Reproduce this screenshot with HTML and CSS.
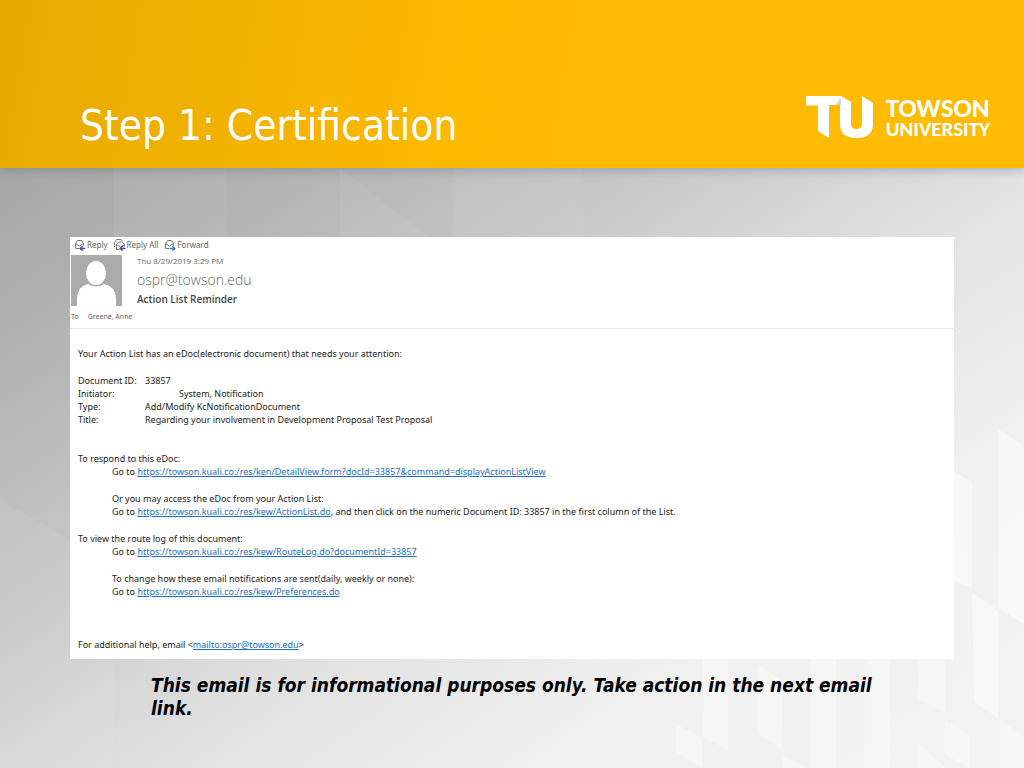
FILE: index.html
```
<!DOCTYPE html>
<html lang="en">
<head>
  <meta charset="UTF-8">
  <meta name="viewport" content="width=device-width, initial-scale=1">
  <title>Step 1: Certification</title>
  <link rel="stylesheet" href="styles.css">
</head>
<body>
  <svg class="backdrop" viewBox="0 0 1024 768" preserveAspectRatio="none" aria-hidden="true">
    <g fill="#fff">
      <path opacity=".05" d="M114 168h113v90H114zM340 168l90 70v20h-90zM453 168h130v90H453zM0 500l114 64v204H0z"/>
      <path opacity=".45" d="M998 429l26 17v178l-26-16zM954 471l18 11v106l-18-7zM972 593l26 17v108l-24-16z"/>
      <path opacity=".35" d="M703 655h25v95l-25-13zM757 664l25 17v68l-25-15zM811 655h25v113h-25zM865 655h25v113h-25zM918 655h27v58l-27-14zM676 724l26 14v30l-26-16zM945 720l24 14v34l-24-14zM1000 720l24 16v32h-24zM783 755l22 13h-22zM918 743l28 25h-28z"/>
    </g>
  </svg>

  <header class="banner">
    <h1>Step 1: Certification</h1>
    <div class="logo">
      <svg width="68" height="43" viewBox="0 0 68 43" aria-hidden="true">
        <path fill="#fff" d="M0 0h35l10 6v22q0 5 5.500 5t5.500-5V0l11 7v21q0 14-16.500 14T34 28V9H23v33l-11-7V9.500H0z"/>
        <path fill="#d5d5d5" d="M35 1v8h-5z"/>
      </svg>
      <div class="logo-text">
        <span class="logo-top">TOWSON</span>
        <span class="logo-bottom">UNIVERSITY</span>
      </div>
    </div>
  </header>

  <main>
    <article class="email">
      <div class="actions">
        <button type="button">
          <svg width="12" height="12" viewBox="0 0 12 12" fill="none" aria-hidden="true"><path stroke="#777" d="M1.500 9.500h4M1.500 9.500v-5l2-3h4l2 3v2M1.500 4.500l4 2.500 4-2.500"/><path stroke="#4a4aa8" stroke-width="1.500" d="M11 9.500H6.500M8.500 7.300L6.300 9.500l2.200 2.200"/></svg>
          Reply
        </button>
        <button type="button">
          <svg width="12" height="12" viewBox="0 0 12 12" fill="none" aria-hidden="true"><path stroke="#777" d="M2.500 10.500h3M2.500 10.500v-5l2-2.500h4l2 2.500v2M2.500 5.500l4 2.500 4-2.500M.5 8V3.500l2-3h4l2 1"/><path stroke="#4a4aa8" stroke-width="1.500" d="M11.500 9.500H6.500M8.500 7.300L6.300 9.500l2.200 2.200"/></svg>
          Reply All
        </button>
        <button type="button">
          <svg width="12" height="12" viewBox="0 0 12 12" fill="none" aria-hidden="true"><path stroke="#777" d="M1.500 9.500h4M1.500 9.500v-5l2-3h4l2 3v2M1.500 4.500l4 2.500 4-2.500"/><path stroke="#2f7fc6" stroke-width="1.500" d="M6 9.500h4.500M8.500 7.300L10.700 9.500l-2.200 2.200"/></svg>
          Forward
        </button>
      </div>

      <div class="sender">
        <svg class="avatar" width="51" height="51" viewBox="0 0 51 51" aria-hidden="true">
          <path fill="#ababab" d="M0 0h51v51H0z"/>
          <ellipse cx="25" cy="18" rx="10" ry="12" fill="#fff"/>
          <path fill="#fff" d="M6 51v-8q1-12 11-14 8 5 16 0 11 2 12 14v8z"/>
        </svg>
        <div>
          <div class="date">Thu 8/29/2019 3:29 PM</div>
          <div class="from">ospr@towson.edu</div>
          <h2>Action List Reminder</h2>
        </div>
      </div>
      <div class="to"><span>To</span><span>Greene, Anne</span></div>

      <div class="message">
        <p>Your Action List has an eDoc(electronic document) that needs your attention:</p>

        <table>
          <tr><th scope="row">Document ID:</th><td>33857</td></tr>
          <tr><th scope="row">Initiator:</th><td class="tabbed">System, Notification</td></tr>
          <tr><th scope="row">Type:</th><td>Add/Modify KcNotificationDocument</td></tr>
          <tr><th scope="row">Title:</th><td>Regarding your involvement in Development Proposal Test Proposal</td></tr>
        </table>

        <p>To respond to this eDoc:</p>
        <p class="indent">Go to <a href="#">https://towson.kuali.co:/res/ken/DetailView.form?docId=33857&amp;command=displayActionListView</a></p>

        <p class="indent gap">Or you may access the eDoc from your Action List:<br>
        Go to <a href="#">https://towson.kuali.co:/res/kew/ActionList.do</a>, and then click on the numeric Document ID: 33857 in the first column of the List.</p>

        <p class="gap">To view the route log of this document:</p>
        <p class="indent">Go to <a href="#">https://towson.kuali.co:/res/kew/RouteLog.do?documentId=33857</a></p>

        <p class="indent gap">To change how these email notifications are sent(daily, weekly or none):<br>
        Go to <a href="#">https://towson.kuali.co:/res/kew/Preferences.do</a></p>

        <p class="help">For additional help, email &lt;<a href="mailto:ospr@towson.edu">mailto:ospr@towson.edu</a>&gt;</p>
      </div>
    </article>

    <p class="note">This email is for informational purposes only. Take action in the next email link.</p>
  </main>
</body>
</html>
```
FILE: styles.css
```
* { box-sizing: border-box; }
body {
  margin: 0;
  min-height: 100vh;
  position: relative;
  font-family: "Carlito", "Lato", sans-serif;
  background: linear-gradient(145deg, #a0a0a0 0%, #adadad 20%, #c8c8c8 42%, #e2e2e2 60%, #f1f1f1 78%, #f3f3f3 100%);
}
h1, h2, p { margin: 0; font-weight: normal; }

.backdrop {
  position: absolute;
  inset: 0;
  width: 100%;
  height: 100%;
  z-index: -1;
}

.banner {
  display: flex;
  justify-content: space-between;
  align-items: flex-start;
  height: 168px;
  padding: 96px 34px 0 80px;
  color: #fff;
  background: linear-gradient(100deg, #e6aa00 0%, #f0b000 20%, #fcb900 45%, #ffbb04 60%);
  box-shadow: 0 2px 10px rgba(90, 100, 105, 0.4);
}
h1 {
  font-family: "DejaVu Sans Condensed", "DejaVu Sans", sans-serif;
  font-size: 42px;
  line-height: 60px;
}
.logo { display: flex; gap: 12px; }
.logo-text { font-weight: bold; }
.logo-text span { display: block; }
.logo-top { font-size: 27px; line-height: 24px; }
.logo-bottom { font-size: 21px; line-height: 18px; }

main { padding: 69px 70px 0; }
.email { background: #fff; }

.actions {
  display: flex;
  gap: 6px;
  height: 18px;
  padding: 1px 4px 0;
}
.actions button {
  display: flex;
  align-items: center;
  gap: 1px;
  height: 13px;
  padding: 0;
  border: 0;
  background: none;
  font-family: "Noto Sans", sans-serif;
  font-size: 8px;
  color: #666;
}

.sender { display: flex; gap: 15px; padding-left: 1px; }
.date {
  font: 8px/11px "Open Sans", sans-serif;
  color: #666;
}
.from {
  font: 300 14px/27px "Open Sans", sans-serif;
  color: #666;
}
h2 {
  font: 600 10px/13px "Open Sans", sans-serif;
  color: #444;
}
.to {
  display: flex;
  gap: 9px;
  padding: 5px 1px 6px;
  border-bottom: 1px solid #e9e9e9;
  font: 7px/11px "Noto Sans", sans-serif;
  color: #666;
}

.message {
  padding: 18px 8px 8px;
  font: 9px/13px "Noto Sans", sans-serif;
  color: #222;
}
.message a { color: #1a6fc4; }
table { margin: 14px 0 26px; border-collapse: collapse; }
th, td { padding: 0; text-align: left; font-weight: normal; }
th { width: 67px; }
.tabbed { padding-left: 34px; }
.indent { padding-left: 34px; }
.gap { margin-top: 14px; }
.help { margin-top: 40px; }

.note {
  padding: 15px 50px 40px 81px;
  font: italic bold 19px/23px "DejaVu Sans Condensed", "DejaVu Sans", sans-serif;
  color: #000;
}
```
